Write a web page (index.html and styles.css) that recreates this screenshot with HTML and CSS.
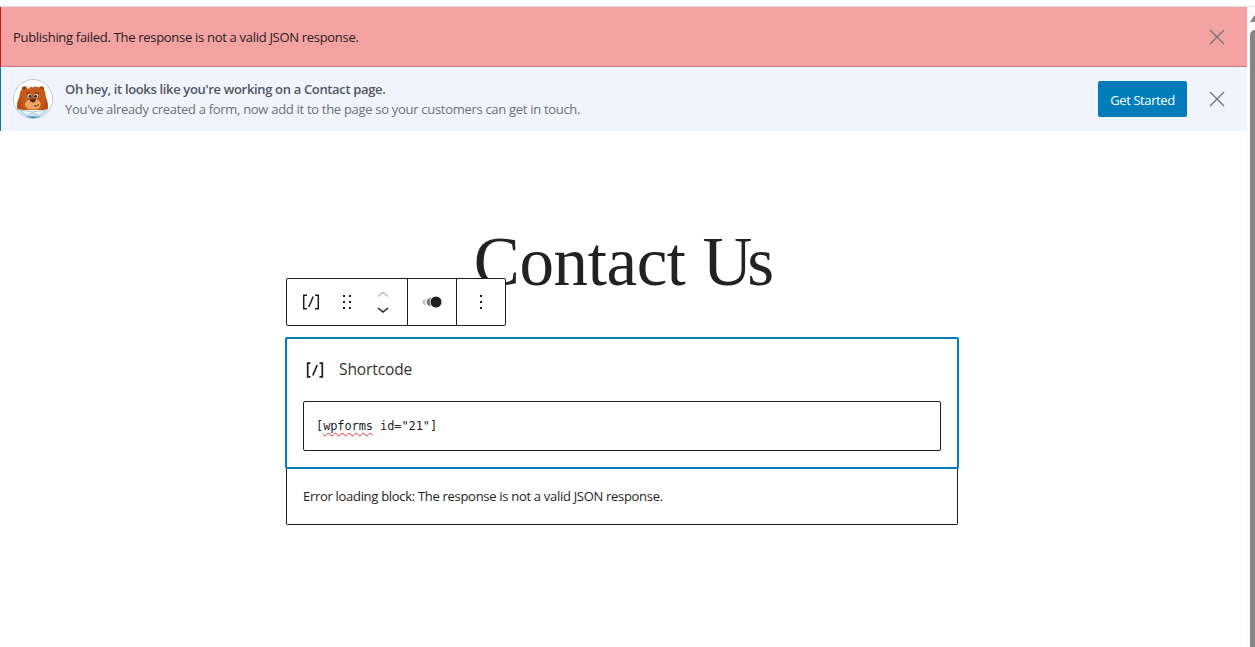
FILE: index.html
```html
<!DOCTYPE html>
<html lang="en">
<head>
<meta charset="utf-8">
<title>Contact Us</title>
<link rel="stylesheet" href="styles.css">
</head>
<body>
<div class="topbar"></div>
<div class="shell">
  <main class="editor">
    <div class="notice notice-error">
      <p class="notice-text"><span class="t-error">Publishing failed. The response is not a valid JSON response.</span></p>
      <svg class="close" width="16" height="16" viewBox="0 0 16 16"><path d="M1 1l14 14M15 1L1 15"/></svg>
    </div>
    <div class="notice notice-info">
      <svg class="avatar" width="40" height="40" viewBox="0 0 40 40">
        <defs><clipPath id="round"><circle cx="20" cy="20" r="19"/></clipPath></defs>
        <circle cx="20" cy="20" r="19.5" fill="#fff" stroke="#c5c8cc"/>
        <g clip-path="url(#round)">
          <circle cx="11.500" cy="10" r="2.700" fill="#a9450f"/><circle cx="28.500" cy="10" r="2.700" fill="#a9450f"/>
          <circle cx="11.800" cy="10.500" r="1.300" fill="#7c310d"/><circle cx="28.200" cy="10.500" r="1.300" fill="#7c310d"/>
          <path d="M7.500 12Q10 9.500 16 9.500L18 7.500 19.500 8.500 22 7.500Q29 8.500 32 12L33 19Q35.500 23 34.500 31H4.500Q3.500 23 6 19Z" fill="#c65b19"/>
          <path d="M6 20Q3.500 24 4.500 31H11Q7 26 8 18ZM33 20Q35.500 24 34.500 31H28Q33 26 32 18Z" fill="#b54c12"/>
          <path d="M20 20C16 19.500 11.500 22.500 12 26Q13 30.500 20 30.500T27.500 26C28.500 22.500 24 19.500 20 20Z" fill="#efa466"/>
          <ellipse cx="16.500" cy="17" rx="2.100" ry="2" fill="#dfe6ea"/><ellipse cx="23" cy="17" rx="2.100" ry="2" fill="#dfe6ea"/>
          <circle cx="17" cy="17.200" r="1.500" fill="#24333d"/><circle cx="22.500" cy="17.200" r="1.500" fill="#24333d"/>
          <path d="M13.500 14.800Q15 13.300 17 14M22 13.800Q24.500 13 26 14.800" stroke="#5a250c" fill="none"/>
          <path d="M16.500 20.300Q20 18.800 23 20.300Q22.500 23.500 20 23.500T16.500 20.300Z" fill="#5b2b19"/>
          <path d="M21 27Q24.500 27.500 26 25.500" stroke="#50261a" fill="none"/>
          <path d="M2 30L8 30.500 20 33 32 30.500 38 30V40H2Z" fill="#cfe5f0"/>
          <path d="M7 31L20 33 33 31 26 36.500 20 33.500 14 36.500Z" fill="#eef9fc" stroke="#9cc6d3" stroke-width=".8"/>
          <path d="M13 37.500H27V40H13Z" fill="#167fc2"/>
        </g>
      </svg>
      <div class="notice-copy">
        <strong class="t-title">Oh hey, it looks like you're working on a Contact page.</strong>
        <span class="t-sub">You've already created a form, now add it to the page so your customers can get in touch.</span>
      </div>
      <button class="primary">Get Started</button>
      <svg class="close" width="16" height="16" viewBox="0 0 16 16"><path d="M1 1l14 14M15 1L1 15"/></svg>
    </div>
    <section class="canvas">
      <h1 class="page-title">Contact <span class="tight">Us</span></h1>
      <div class="toolbar">
        <div class="tool-group group-main">
          <svg width="120" height="46" viewBox="0 0 120 46">
            <g fill="none" stroke="#1e1e1e" stroke-width="1.500">
              <path d="M20 16.200H16.700V29.800H20M28 16.200H31.300V29.800H28M26.200 17.500L21.800 28"/>
              <path d="M91 17.500L96 13.500 101 17.500" stroke="#bbb"/>
              <path d="M91 29L96 33 101 29"/>
            </g>
            <path fill="#1e1e1e" d="M56 16h2v2h-2zM62 16h2v2h-2zM56 22h2v2h-2zM62 22h2v2h-2zM56 28h2v2h-2zM62 28h2v2h-2z"/>
          </svg>
        </div>
        <div class="tool-group">
          <svg width="48" height="46" viewBox="0 0 48 46">
            <circle cx="28" cy="23" r="5.500" fill="#1e1e1e"/>
            <path d="M23.300 18.800Q18.500 19.500 18.500 23T23.300 27.200Q20 23 23.300 18.800Z" fill="#777"/>
            <path d="M18 20Q14.500 20.500 14.500 23T18 26Q16 23 18 20Z" fill="#bbb"/>
          </svg>
        </div>
        <div class="tool-group">
          <svg width="48" height="46" viewBox="0 0 48 46"><path fill="#1e1e1e" d="M23 16h2v2h-2zM23 22h2v2h-2zM23 28h2v2h-2z"/></svg>
        </div>
      </div>
      <div class="block">
        <div class="block-label">
          <svg width="20" height="20" viewBox="0 0 20 20"><path d="M5.500 3.200H2.700V16.800H5.500M14.500 3.200H17.300V16.800H14.500M12.200 5L7.800 15.500" fill="none" stroke="#1e1e1e" stroke-width="1.700"/></svg>
          <span class="label-text">Shortcode</span>
        </div>
        <div class="field"><code>[<span class="misspelt">wpforms</span> id="21"]</code></div>
      </div>
      <div class="block-error"><span class="t-load">Error loading block: The response is not a valid JSON response.</span></div>
    </section>
  </main>
  <div class="scrollbar">
    <svg class="arrow" width="8" height="8" viewBox="0 0 8 8"><path d="M3 7L6.500 1.500Q8 0 9 1.500V7Z" fill="#858585"/></svg>
    <div class="thumb"></div>
  </div>
</div>
</body>
</html>
```
FILE: styles.css
```css
* { box-sizing: border-box; }
body { margin: 0; height: 647px; overflow: hidden; background: #fff; color: #1e1e1e; font: 13px/20px "Open Sans", "Noto Sans", sans-serif; display: flex; flex-direction: column; }
.topbar { height: 7px; flex: none; border-bottom: 1px solid #ddd; }
.shell { display: flex; flex: 1; min-height: 0; }
.editor { width: 1247px; }
.notice { display: flex; align-items: center; padding: 0 22px 0 12px; }
.notice-error { height: 60px; background: #f4a2a2; border-left: 1px solid #cc1818; border-bottom: 1px solid #c87c80; }
.notice-info { height: 64px; background: #f0f5fd; border-left: 1px solid #007cba; }
.notice-text { margin: 0; flex: 1; }
.close { flex: none; fill: none; stroke: #757575; stroke-width: 1.4; }
.notice-copy { display: flex; flex-direction: column; flex: 1; margin-left: 12px; white-space: nowrap; color: #50575e; }
.t-error { letter-spacing: -0.3px; }
.t-title { font-weight: 600; letter-spacing: -0.34px; }
.t-sub { color: #6c7177; letter-spacing: -0.3px; }
.t-load { letter-spacing: -0.3px; }
.primary { width: 89px; height: 36px; margin-right: 22px; padding: 2px 0 0; border: 0; border-radius: 2px; background: #007cba; color: #fff; font: 13px "Open Sans", sans-serif; letter-spacing: -0.4px; }
.canvas { position: relative; width: 674px; margin-left: 285px; padding-top: 90px; }
.page-title { margin: 0; height: 116px; padding-left: 3px; text-align: center; font: 400 69px/82px "Liberation Serif", serif; letter-spacing: -0.4px; color: #222; }
.tight { letter-spacing: -5px; margin-right: 4px; }
.toolbar { position: absolute; left: 1px; top: 147px; display: flex; width: 220px; height: 48px; border: 1px solid #1e1e1e; border-radius: 2px; background: #fff; }
.tool-group { width: 49px; border-left: 1px solid #1e1e1e; }
.group-main { width: 120px; border-left: 0; }
.tool-group svg { display: block; }
.block { height: 132px; border: 2px solid #007cba; border-radius: 2px; padding: 20px 16px 0; }
.block-label { display: flex; align-items: center; height: 22px; padding-left: 2px; gap: 14px; font-size: 15.5px; letter-spacing: -0.1px; color: #333; }
.label-text { padding-bottom: 3px; }
.field { margin-top: 20px; height: 50px; border: 1px solid #1e1e1e; border-radius: 2px; padding: 13px 12px; }
code { font: 12px/20px "DejaVu Sans Mono", monospace; letter-spacing: -0.1px; }
.misspelt { text-decoration: underline wavy #e33 1px; text-underline-offset: 2px; text-decoration-skip-ink: none; }
.block-error { height: 56px; margin: 0 1px; border: 1px solid #1e1e1e; border-top: 0; border-radius: 0 0 2px 2px; padding: 17px 16px; }
.scrollbar { width: 8px; background: #fcfcfc; padding: 8px 0 0; display: flex; flex-direction: column; gap: 7px; }
.arrow { flex: none; }
.thumb { flex: 1; margin-left: 3px; background: #858585; border-radius: 5px 0 0; }
```
